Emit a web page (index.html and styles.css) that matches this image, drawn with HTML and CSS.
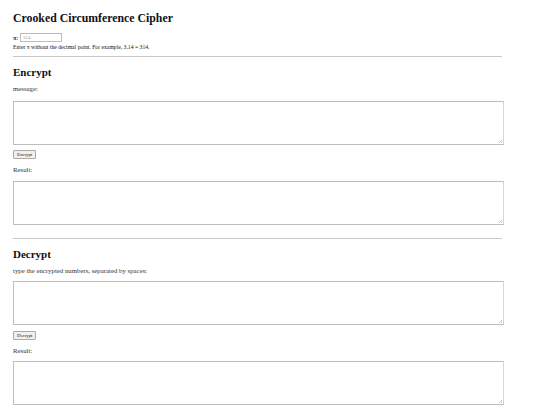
FILE: index.html
```html
<!DOCTYPE html>
<html>
<head>
<meta charset="utf-8">
<title>Crooked Circumference Cipher</title>
<link rel="stylesheet" href="styles.css">
</head>
<body>
<div class="page">
  <h1 class="title">Crooked Circumference Cipher</h1>
  <div class="pi-row"><label class="pi-label">π:</label><input class="pi-input" type="text" placeholder="314"></div>
  <div class="help">Enter π without the decimal point. For example, 3.14 = 314.</div>
  <hr class="rule rule-first">
  <h2 class="section">Encrypt</h2>
  <div class="label">message:</div>
  <textarea class="box"></textarea>
  <div class="btn-row"><button class="btn">Encrypt</button></div>
  <div class="label result">Result:</div>
  <textarea class="box box-result"></textarea>
  <hr class="rule rule-second">
  <h2 class="section">Decrypt</h2>
  <div class="label">type the encrypted numbers, separated by spaces:</div>
  <textarea class="box box-tight"></textarea>
  <div class="btn-row btn-row-tight"><button class="btn">Decrypt</button></div>
  <div class="label result">Result:</div>
  <textarea class="box box-result box-result-tight"></textarea>
</div>
</body>
</html>
```
FILE: styles.css
```css
html, body {
  margin: 0;
  padding: 0;
  background: #fff;
  color: #111;
  font-family: "Liberation Serif", "Times New Roman", serif;
}
.page {
  padding: 10px 38px 8px 13px;
  display: flex;
  flex-direction: column;
  align-items: stretch;
}
.title {
  margin: 0;
  font-size: 11.8px;
  line-height: 16px;
  font-weight: bold;
}
.pi-row {
  margin-top: 7px;
  display: flex;
  align-items: center;
  height: 9px;
}
.pi-label {
  font-size: 5.8px;
  font-weight: bold;
  margin-right: 2px;
}
.pi-input {
  box-sizing: border-box;
  width: 42px;
  height: 9px;
  margin: 0;
  padding: 0 2px;
  border: 1px solid #bbb;
  font-family: inherit;
  font-size: 5px;
  outline: none;
}
.pi-input::placeholder { color: #999; }
.help {
  margin-top: 2px;
  font-size: 5.7px;
  line-height: 6px;
}
.rule {
  margin: 0;
  border: 0;
  height: 1px;
  background: #c8c8c8;
}
.rule-first { margin-top: 6px; }
.rule-second { margin-top: 13px; }
.section {
  margin: 8px 0 0 0;
  font-size: 11px;
  line-height: 14px;
  font-weight: bold;
}
.label {
  margin-top: 6px;
  font-size: 6.8px;
  line-height: 8px;
  color: #333;
}
.label.result { margin-top: 7px; }
.box {
  box-sizing: border-box;
  display: block;
  width: calc(100% + 2px);
  height: 44px;
  margin: 8px 0 0 0;
  border: 1px solid #bdbdbd;
  border-right-color: #d6d6d6;
  resize: none;
  font-family: inherit;
  background-color: #fff;
  background-image:
    linear-gradient(135deg, transparent 0 55%, #c4c4c4 55% 65%, transparent 65% 80%, #c4c4c4 80% 90%, transparent 90%);
  background-size: 4px 4px;
  background-repeat: no-repeat;
  background-position: right 1px bottom 1px;
}
.box.box-tight { margin-top: 6px; }
.box.box-result { margin-top: 7px; }
.box.box-result-tight { margin-top: 6px; }
.btn-row {
  margin-top: 5px;
  display: flex;
}
.btn-row.btn-row-tight { margin-top: 6px; }
.btn {
  box-sizing: border-box;
  height: 9px;
  margin: 0;
  padding: 0 3px;
  font-family: inherit;
  font-size: 4.8px;
  line-height: 7px;
  color: #222;
  background: #f0f0f0;
  border: 1px solid #aaa;
  border-radius: 1px;
}
```
